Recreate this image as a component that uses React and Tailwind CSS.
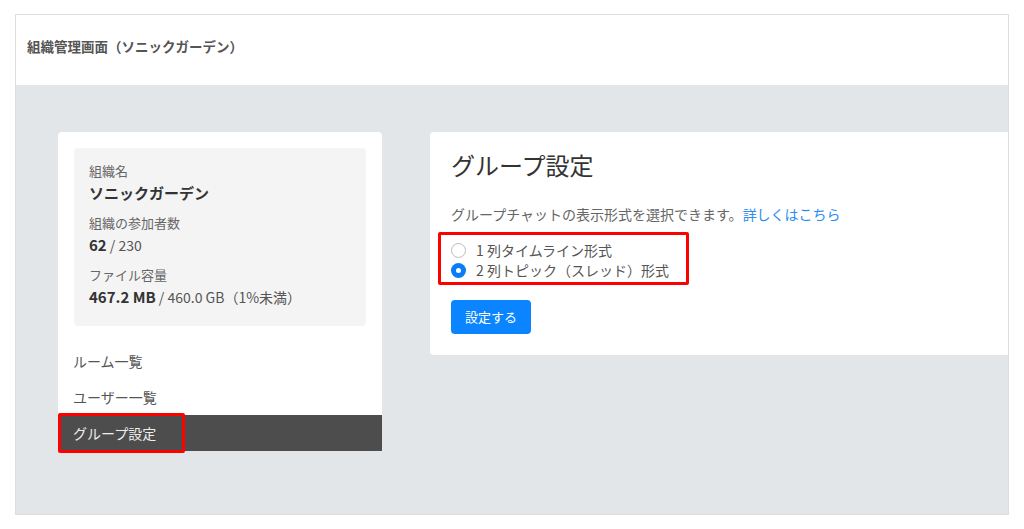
import React from 'react';

const font = { fontFamily: '"Noto Sans CJK JP", "Noto Sans", sans-serif' };

function InfoBox() {
  return (
    <div className="bg-[#f4f4f4] rounded-[4px] px-[15px] pt-[13px] pb-[17px] text-[#444]">
      <div className="text-[13px] leading-[20px] text-[#666]">組織名</div>
      <div className="text-[15px] leading-[24px] font-bold text-[#333]">ソニックガーデン</div>
      <div className="mt-[8px] text-[13px] leading-[20px] text-[#666]">組織の参加者数</div>
      <div className="text-[14px] leading-[24px] text-[#555]">
        <span className="text-[15px] font-bold text-[#333]">62</span> / 230
      </div>
      <div className="mt-[8px] text-[13px] leading-[20px] text-[#666]">ファイル容量</div>
      <div className="text-[14px] leading-[24px] text-[#555]">
        <span className="text-[15px] font-bold text-[#333]">467.2 MB</span> / 460.0 GB（1%未満）
      </div>
    </div>
  );
}

function Sidebar() {
  return (
    <div className="w-[324px] bg-white rounded-t-[4px] pt-[16px] self-start">
      <div className="px-[16px]">
        <InfoBox />
      </div>
      <ul className="mt-[17px] text-[14px] text-[#555]">
        <li className="h-[36px] flex items-center px-[15px]">ルーム一覧</li>
        <li className="h-[36px] flex items-center px-[15px]">ユーザー一覧</li>
        <li className="relative h-[36px] flex items-center px-[15px] bg-[#4d4d4d] text-[#eee]">
          グループ設定
          <span className="absolute left-0 top-[-2px] w-[127px] h-[40px] border-[3px] border-[#ff0000] rounded-[2px]" />
        </li>
      </ul>
    </div>
  );
}

function GroupSettings() {
  return (
    <div className="flex-1 bg-white rounded-l-[4px] pl-[21px] pt-[16px] pb-[21px] self-start">
      <h1 className="text-[24px] leading-[34px] text-[#333]">グループ設定</h1>
      <p className="mt-[22px] text-[14px] leading-[20px] text-[#666]">
        グループチャットの表示形式を選択できます。<span className="text-[#2b8cf0]">詳しくはこちら</span>
      </p>
      <div className="mt-[8px] ml-[-13px] w-[251px] h-[53px] border-[3px] border-[#ff0000] rounded-[2px] pl-[10px] pt-[5px] text-[14px] text-[#555]">
        <label className="flex items-center h-[20px] gap-[10px]">
          <span className="w-[15px] h-[15px] rounded-full border border-[#bbb] bg-white" />
          <span>1 列タイムライン形式</span>
        </label>
        <label className="flex items-center h-[20px] gap-[10px]">
          <span className="w-[15px] h-[15px] rounded-full bg-[#0a7cf5] flex items-center justify-center">
            <span className="w-[5px] h-[5px] rounded-full bg-white" />
          </span>
          <span>2 列トピック（スレッド）形式</span>
        </label>
      </div>
      <button className="mt-[15px] w-[80px] h-[34px] rounded-[4px] bg-[#0a84ff] text-white text-[13px]">
        設定する
      </button>
    </div>
  );
}

export default function App() {
  return (
    <div className="w-[1024px] h-[529px] bg-white pt-[14px] pl-[15px]" style={font}>
      <div className="w-[994px] h-[501px] border border-[#dedede] flex flex-col">
        <header className="h-[70px] bg-white flex items-center pl-[11px] pb-[8px] text-[13.5px] font-bold text-[#555]">
          組織管理画面（ソニックガーデン）
        </header>
        <main className="flex-1 bg-[#e3e6e9] flex gap-[48px] pl-[42px] pt-[47px]">
          <Sidebar />
          <GroupSettings />
        </main>
      </div>
    </div>
  );
}
